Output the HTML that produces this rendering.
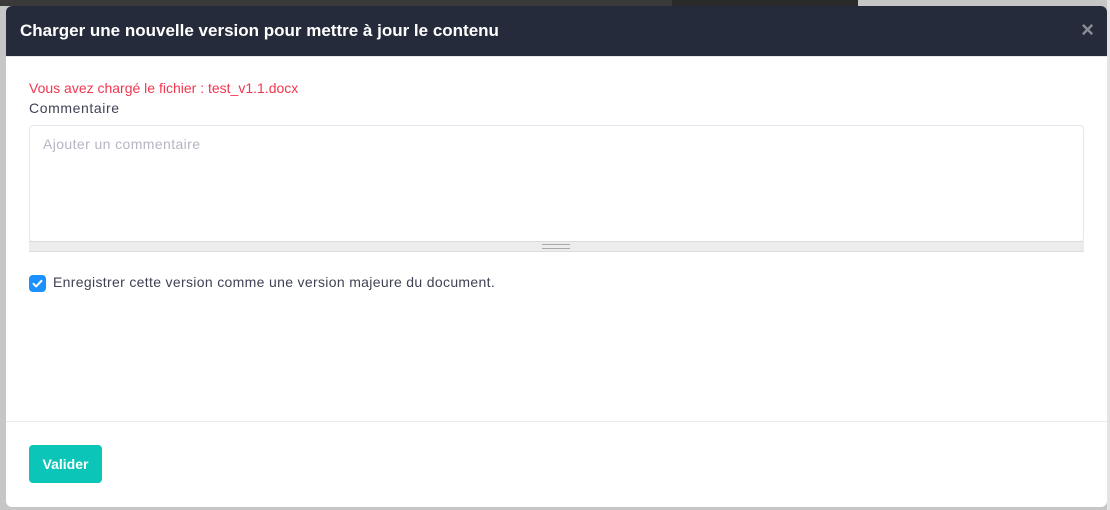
<!DOCTYPE html>
<html><head><style>
body{margin:0;width:1110px;height:510px;background:#c6c6c6;position:relative;overflow:hidden;font-family:"Liberation Sans",sans-serif}
.top{position:absolute;left:0;top:0;width:858px;height:6px;background:#3a3a3a}
.top2{position:absolute;left:672px;top:0;width:186px;height:6px;background:#2a2a2a}
.rt{position:absolute;left:1107px;top:0;width:3px;height:510px;background:#e4e4e4}
.modal{position:absolute;left:6px;top:6px;width:1101px;height:501px;background:#fff;border-radius:6px;overflow:hidden}
.hd{height:50px;background:#252b3b;color:#fff;font-weight:bold;font-size:17px;line-height:50px;padding-left:14px;border-bottom:1px solid #e6e8ee}
.x{position:absolute;right:13px;top:13px;color:#8a8d96;font-size:22px;font-weight:bold;line-height:22px}
.err{position:absolute;left:23px;top:74px;color:#f1364f;font-size:14px}
.lbl{position:absolute;left:23px;top:94px;color:#3f4254;font-size:14px;letter-spacing:0.6px}
.ta{position:absolute;left:23px;top:119px;width:1053px;height:115px;border:1px solid #e4e6ef;border-radius:4px;}
.ph{position:absolute;left:13px;top:10px;color:#b5b5c3;font-size:14px;letter-spacing:0.4px}
.bar{position:absolute;left:23px;top:235px;width:1055px;height:9px;background:#ececec;border-top:1px solid #ddd;border-bottom:1px solid #ddd}
.bar i{position:absolute;left:513px;top:2px;width:28px;height:3px;border-top:1px solid #aaa;border-bottom:1px solid #aaa}
.cb{position:absolute;left:23px;top:269px;width:17px;height:17px;background:#1b91ff;border-radius:4px}
.cl{position:absolute;left:47px;top:268px;color:#3f4254;font-size:14px;letter-spacing:0.33px}
.ft{position:absolute;left:0;top:415px;width:100%;border-top:1px solid #e8e8ee}
.btn{position:absolute;left:23px;top:439px;width:73px;height:38px;background:#0bc5b9;border-radius:4px;color:#fff;font-size:14px;font-weight:bold;text-align:center;line-height:38px}
</style></head><body>
<div class="top"></div><div class="top2"></div><div class="rt"></div>
<div class="modal">
<div class="hd">Charger une nouvelle version pour mettre à jour le contenu</div>
<div class="x">×</div>
<div class="err">Vous avez chargé le fichier : test_v1.1.docx</div>
<div class="lbl">Commentaire</div>
<div class="ta"><div class="ph">Ajouter un commentaire</div></div>
<div class="bar"><i></i></div>
<div class="cb"><svg width="17" height="17" viewBox="0 0 17 17"><path d="M4.5 8.8l2.6 2.6 5.4-5.6" stroke="#fff" stroke-width="2" fill="none" stroke-linecap="round" stroke-linejoin="round"/></svg></div>
<div class="cl">Enregistrer cette version comme une version majeure du document.</div>
<div class="ft"></div>
<div class="btn">Valider</div>
</div>
</body></html>
